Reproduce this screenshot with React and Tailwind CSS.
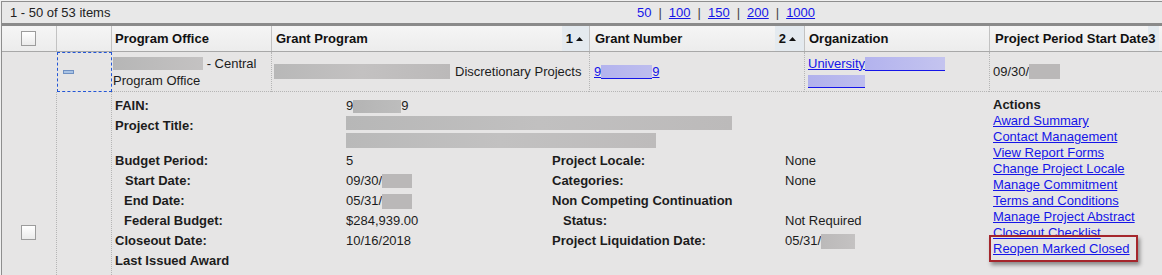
import React from "react";

const Tri = () => (
  <svg width="7" height="4" viewBox="0 0 7 4" className="ml-[3px]">
    <polygon points="0,4 3.5,0 7,4" fill="#111" />
  </svg>
);

const Check = ({ className = "" }) => (
  <span className={`block h-[15px] w-[15px] border border-[#9c9c9c] bg-gradient-to-b from-white to-[#ebebeb] ${className}`} />
);

export default function App() {
  const link = "text-[#1515e8] underline";
  return (
    <div className="min-h-screen bg-[#f0f0f0] pl-px pt-px font-['Liberation_Sans',Arial,sans-serif] text-[13px] text-[#151515]">
      <div className="w-[1161px] overflow-hidden border-l border-t border-[#8e8e8e] bg-[#e6e5e5]">
        {/* pager */}
        <div className="flex h-[21px] items-center bg-[#e8e8e8] pl-[8px] text-[#222]">
          <span className="w-[627px]">1 - 50 of 53 items</span>
          <div className="flex gap-[7px]">
            <span className="text-[#1515e8]">50</span>
            <span className="text-[#444]">|</span>
            <a className={link}>100</a>
            <span className="text-[#444]">|</span>
            <a className={link}>150</a>
            <span className="text-[#444]">|</span>
            <a className={link}>200</a>
            <span className="text-[#444]">|</span>
            <a className={link}>1000</a>
          </div>
        </div>
        <div className="h-[3px] bg-[#8a8a8a]" />

        {/* header */}
        <div className="grid h-[26px] grid-cols-[54px_55px_160px_318px_215px_185px_1fr] border-b border-[#a8a8a8] bg-gradient-to-b from-[#f5f5f5] to-[#ececec] font-bold text-[#111]">
          <div className="flex items-center pl-[19px]">
            <Check />
          </div>
          <div className="border-l border-[#c2c2c2]" />
          <div className="flex items-center border-l border-[#c2c2c2] pl-[3px]">Program Office</div>
          <div className="flex items-center justify-between border-l border-[#c2c2c2] pl-[4px]">
            <span>Grant Program</span>
            <span className="flex items-center self-stretch bg-[#e4eaef] pl-[4px] pr-[6px]">
              1<Tri />
            </span>
          </div>
          <div className="flex items-center justify-between border-l border-[#c2c2c2] pl-[5px]">
            <span>Grant Number</span>
            <span className="flex items-center self-stretch bg-[#e4eaef] pl-[4px] pr-[8px]">
              2<Tri />
            </span>
          </div>
          <div className="flex items-center border-l border-[#c2c2c2] pl-[4px]">Organization</div>
          <div className="flex items-center whitespace-nowrap border-l border-[#c2c2c2] pl-[5px]">
            Project Period Start Date<span className="self-stretch bg-[#e4eaef] pr-[4px] leading-[25px]">3</span>
          </div>
        </div>

        {/* data row */}
        <div className="grid h-[40px] grid-cols-[54px_55px_160px_318px_215px_185px_1fr] leading-[17px] text-[#1c1c1c]">
          <div />
          <div className="relative">
            <div className="ml-px flex h-[40px] w-[55px] items-center border border-dashed border-[#2356d6] pl-[5px]">
              <span className="block h-[4px] w-[11px] border border-[#6f90c2] bg-[#a9c3e4]" />
            </div>
          </div>
          <div className="flex items-center border-b border-dotted border-[#b5b5b5] pl-[2px]">
            <div>
              <span className="inline-block h-[13px] w-[90px] bg-gradient-to-r from-[#b6b6b6] to-[#c4c2c2] align-[-2px]" />
              {" "}- Central
              <br />
              Program Office
            </div>
          </div>
          <div className="flex items-center border-b border-l border-dotted border-[#b5b5b5] pl-[2px]">
            <span className="inline-block h-[15px] w-[176px] bg-gradient-to-r from-[#b8b8b8] via-[#c3c1c1] to-[#bbb9b9]" />
            <span className="ml-[5px]">Discretionary Projects</span>
          </div>
          <div className="flex items-center border-b border-l border-dotted border-[#b5b5b5] pl-[4px]">
            <a className={`${link} flex items-center`}>
              9
              <span className="inline-block h-[14px] w-[51px] border-b border-[#1515e8] bg-gradient-to-r from-[#b3b3ee] to-[#bdbdee]" />
              9
            </a>
          </div>
          <div className="flex items-center border-b border-l border-dotted border-[#b5b5b5] pl-[3px]">
            <div>
              <a className={link}>University</a>
              <span className="inline-block h-[14px] w-[80px] border-b border-[#1515e8] bg-gradient-to-r from-[#b3b3ee] to-[#c4c4ef] align-[-3px]" />
              <br />
              <span className="inline-block h-[13px] w-[57px] border-b border-[#1515e8] bg-gradient-to-r from-[#b1b1ec] to-[#bdbdee] align-[-3px]" />
            </div>
          </div>
          <div className="flex items-center border-b border-l border-dotted border-[#b5b5b5] pl-[3px]">
            09/30/
            <span className="inline-block h-[15px] w-[31px] bg-[#bab8b8]" />
          </div>
        </div>

        {/* detail row */}
        <div className="grid h-[183px] grid-cols-[54px_55px_1fr] leading-5 text-[#1c1c1c]">
          <div className="pl-[19px] pt-[133px]">
            <Check />
          </div>
          <div className="border-l border-dotted border-[#b5b5b5]" />
          <div className="flex border-l border-dotted border-[#b5b5b5] pl-[3px] pt-[4px]">
            <div className="grid w-[878px] grid-cols-[231px_206px_233px_208px] grid-rows-[20px_35px_20px_20px_20px_20px_20px_20px] content-start">
              <div className="font-bold">FAIN:</div>
              <div className="flex items-center">
                9
                <span className="inline-block h-[13px] w-[48px] bg-gradient-to-r from-[#b4b4b4] to-[#bdbdbd]" />
                9
              </div>
              <div />
              <div />

              <div className="font-bold">Project Title:</div>
              <div className="col-span-3">
                <div className="h-[14px] w-[386px] bg-gradient-to-r from-[#b7b7b7] via-[#c1c0c0] to-[#bcbaba]" />
                <div className="mt-[3px] h-[15px] w-[310px] bg-gradient-to-r from-[#b9b9b9] via-[#c2c1c1] to-[#bdbbbb]" />
              </div>

              <div className="font-bold">Budget Period:</div>
              <div>5</div>
              <div className="font-bold">Project Locale:</div>
              <div>None</div>

              <div className="pl-[10px] font-bold">Start Date:</div>
              <div className="flex items-center">
                09/30/
                <span className="inline-block h-[14px] w-[30px] bg-[#bab8b8]" />
              </div>
              <div className="font-bold">Categories:</div>
              <div>None</div>

              <div className="pl-[9px] font-bold">End Date:</div>
              <div className="flex items-center">
                05/31/
                <span className="inline-block h-[15px] w-[30px] bg-[#bab8b8]" />
              </div>
              <div className="whitespace-nowrap font-bold">Non Competing Continuation</div>
              <div />

              <div className="pl-[9px] font-bold">Federal Budget:</div>
              <div>$284,939.00</div>
              <div className="pl-[11px] font-bold">Status:</div>
              <div>Not Required</div>

              <div className="font-bold">Closeout Date:</div>
              <div>10/16/2018</div>
              <div className="font-bold">Project Liquidation Date:</div>
              <div className="flex items-center">
                05/31/
                <span className="inline-block h-[15px] w-[34px] bg-gradient-to-r from-[#bbb9b9] to-[#c4c2c2]" />
              </div>

              <div className="font-bold">Last Issued Award</div>
            </div>

            <div className="mt-[1px] flex flex-col items-start leading-4">
              <span className="font-bold">Actions</span>
              <a className={link}>Award Summary</a>
              <a className={link}>Contact Management</a>
              <a className={link}>View Report Forms</a>
              <a className={link}>Change Project Locale</a>
              <a className={link}>Manage Commitment</a>
              <a className={link}>Terms and Conditions</a>
              <a className={link}>Manage Project Abstract</a>
              <a className={link}>Closeout Checklist</a>
              <span className="relative -mb-[5px] -ml-[4px] -mt-[6px] border-2 border-[#a5262c] pb-[3px] pl-[2px] pr-[6px] pt-[4px] shadow-[2px_3px_4px_rgba(0,0,0,0.4)]">
                <a className={link}>Reopen Marked Closed</a>
              </span>
            </div>
          </div>
        </div>
      </div>
    </div>
  );
}
